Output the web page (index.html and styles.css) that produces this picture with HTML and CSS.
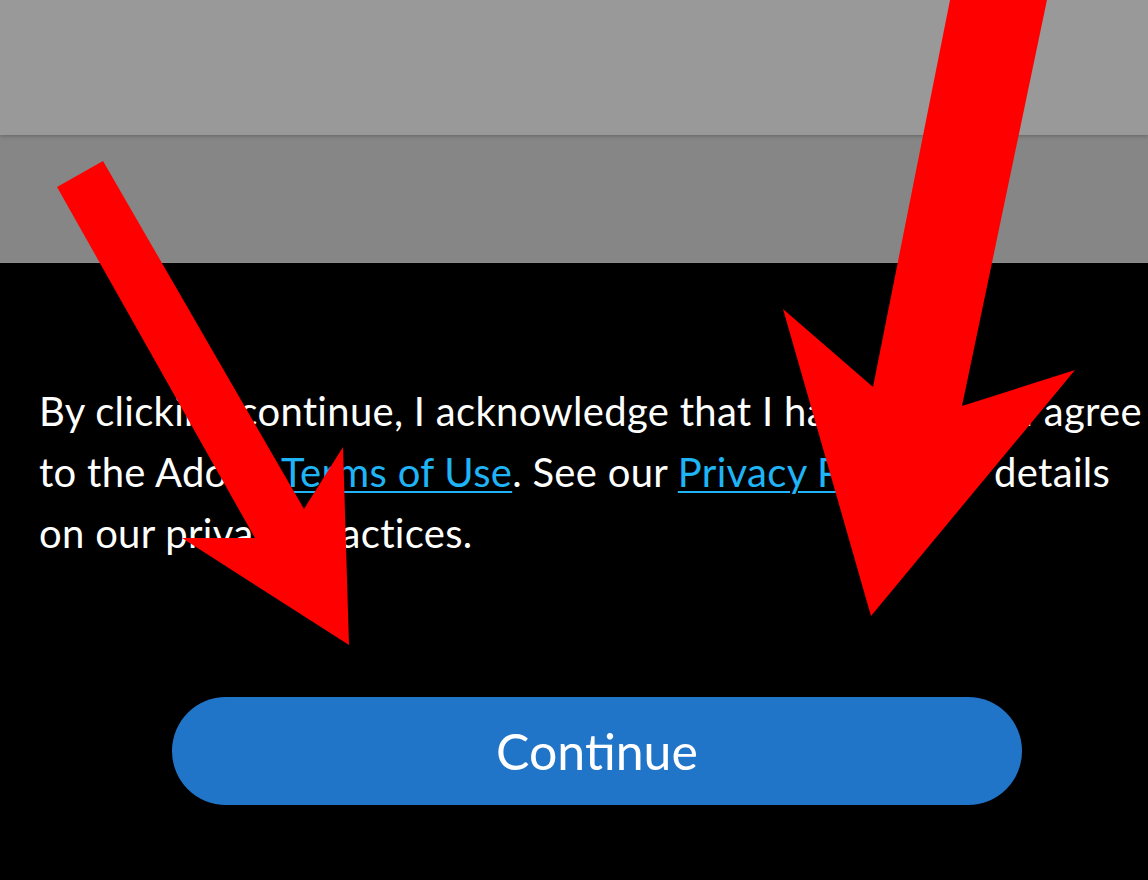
FILE: index.html
```html
<!DOCTYPE html>
<html lang="en">
<head>
<meta charset="utf-8">
<title>Terms</title>
<link rel="stylesheet" href="styles.css">
</head>
<body>
<div class="page">
  <div class="band band-top"></div>
  <div class="band band-mid"></div>
  <main class="consent">
    <p class="legal">
      <span class="line">By clicking continue, I acknowledge that I have read and agree</span>
      <span class="line">to the Adobe <a href="#">Terms of Use</a>. See our <a href="#">Privacy Policy</a> for details</span>
      <span class="line">on our privacy practices.</span>
    </p>
    <div class="actions">
      <button class="continue">Continue</button>
    </div>
  </main>
  <svg class="arrows" viewBox="0 0 1148 880" width="1148" height="880" aria-hidden="true">
    <polygon points="57,187 103,161 304,509 343,447 349,645 182,538 255,538" fill="#ff0000"/>
    <polygon points="951,-5 1048,-5 962,406 1075,370 871,616 783,309 873,387" fill="#ff0000"/>
  </svg>
</div>
</body>
</html>
```
FILE: styles.css
```css
html, body {
  margin: 0;
  padding: 0;
  background: #000;
}
body {
  font-family: Lato, "Open Sans", sans-serif;
  color: #fff;
  overflow: hidden;
}
.page {
  position: relative;
  width: 1148px;
  height: 880px;
  overflow: hidden;
  background: #000;
}
.band-top {
  height: 135px;
  background: #999999;
  position: relative;
  z-index: 1;
  box-shadow: 0 1px 4px rgba(0,0,0,0.25);
}
.band-mid {
  height: 127px;
  background: #868686;
  border-bottom: 1px solid #8c8c8c;
}
.consent {
  padding: 118px 0 0 39px;
}
.legal {
  margin: 0;
  font-size: 40px;
  line-height: 61px;
  letter-spacing: 0.3px;
  white-space: nowrap;
}
.line {
  display: block;
}
.legal a {
  color: #1eb4f5;
  text-decoration: underline;
  text-decoration-thickness: 2px;
  text-underline-offset: 4px;
}
.actions {
  margin-top: 133px;
  padding-left: 133px;
}
.continue {
  display: flex;
  align-items: center;
  justify-content: center;
  width: 850px;
  height: 108px;
  border: none;
  border-radius: 54px;
  background: #2175c9;
  color: #fff;
  font-family: Lato, "Open Sans", sans-serif;
  font-size: 50px;
  padding: 0;
}
.arrows {
  position: absolute;
  left: 0;
  top: 0;
  z-index: 2;
}
```
